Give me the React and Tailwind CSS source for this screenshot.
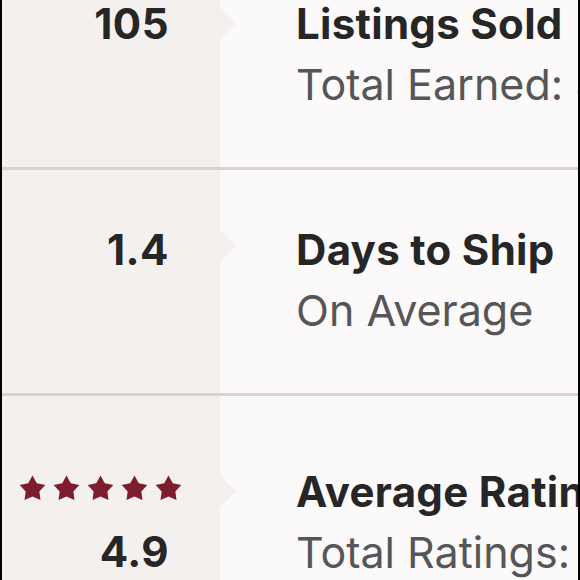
import React from "react";

const Star = () => (
  <svg width="27" height="27" viewBox="0 0 24 24" className="shrink-0">
    <path
      d="M12 0.4L15.8 7.3L23.4 8.9L18.1 14.6L19.1 22.3L12 19L4.9 22.3L5.9 14.6L0.6 8.9L8.2 7.3Z"
      fill="#7e1d30"
    />
  </svg>
);

function Row({ pt, notchTop, left1, left2, heading, sub }) {
  return (
    <div className="flex h-[226px] border-b-[3px] border-[#d6d3d0]">
      <div className={`relative w-[218px] shrink-0 bg-[#f3f0ed] flex flex-col items-end pr-[51px] ${pt}`}>
        <div className="h-[60px] flex items-center leading-[60px]">{left1}</div>
        {left2 && <div className="h-[60px] leading-[60px]">{left2}</div>}
        <div
          className={`absolute right-[-16px] ${notchTop} w-0 h-0 border-y-[16px] border-y-transparent border-l-[16px] border-l-[#f3f0ed]`}
        />
      </div>
      <div className={`flex-1 min-w-0 overflow-hidden whitespace-nowrap pl-[76px] ${pt}`}>
        <div className="h-[60px] leading-[60px] text-[42px] font-bold tracking-[0.3px] text-[#262626]">{heading}</div>
        <div className="h-[60px] leading-[60px] text-[43px] text-[#565656]">{sub}</div>
      </div>
    </div>
  );
}

const Num = ({ children }) => (
  <span className="text-[42px] font-bold tracking-[0.5px] text-[#262626] leading-[60px]">{children}</span>
);

export default function App() {
  return (
    <div
      className="w-[580px] h-[580px] overflow-hidden border-x-2 border-black bg-[#fbf9fa]"
      style={{ fontFamily: "Inter, 'Liberation Sans', sans-serif" }}
    >
      <div className="-mt-[56px]">
        <Row
          pt="pt-[50px]"
          notchTop="top-[63px]"
          left1={<Num>105</Num>}
          heading="Listings Sold"
          sub="Total Earned: $12,480"
        />
        <Row
          pt="pt-[50px]"
          notchTop="top-[60px]"
          left1={<Num>1.4</Num>}
          heading="Days to Ship"
          sub="On Average"
        />
        <Row
          pt="pt-[66px]"
          notchTop="top-[79px]"
          left1={
            <div className="flex gap-[7px] mr-[-13px] -mt-[8px]">
              <Star />
              <Star />
              <Star />
              <Star />
              <Star />
            </div>
          }
          left2={<Num>4.9</Num>}
          heading="Average Rating"
          sub="Total Ratings: 86"
        />
      </div>
    </div>
  );
}
